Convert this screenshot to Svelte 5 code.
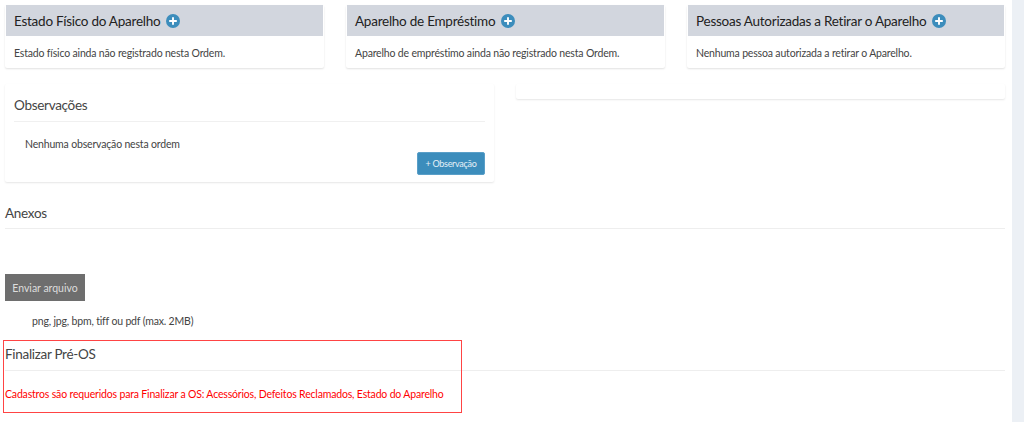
<script>
  const cards = [
    { title: 'Estado Físico do Aparelho', text: 'Estado físico ainda não registrado nesta Ordem.' },
    { title: 'Aparelho de Empréstimo', text: 'Aparelho de empréstimo ainda não registrado nesta Ordem.' },
    { title: 'Pessoas Autorizadas a Retirar o Aparelho', text: 'Nenhuma pessoa autorizada a retirar o Aparelho.' },
  ];
</script>

<div class="page">
  <main class="content">
    <div class="cards">
      {#each cards as card}
        <section class="card">
          <header class="card-head">
            <h3>{card.title}</h3>
            <svg class="plus" viewBox="0 0 14 14" width="14" height="14" aria-hidden="true">
              <circle cx="7" cy="7" r="7" fill="#3c8dbc" />
              <path d="M7 3.2v7.6M3.2 7h7.6" stroke="#fff" stroke-width="1.9" />
            </svg>
          </header>
          <p>{card.text}</p>
        </section>
      {/each}
    </div>

    <div class="split">
      <section class="box obs">
        <h4>Observações</h4>
        <p class="empty">Nenhuma observação nesta ordem</p>
        <div class="actions">
          <button class="btn-obs" type="button">+ Observação</button>
        </div>
      </section>
      <section class="box blank"></section>
    </div>

    <section class="anexos">
      <h4 class="section-title">Anexos</h4>
      <button class="btn-send" type="button">Enviar arquivo</button>
      <p class="hint">png, jpg, bpm, tiff ou pdf (max. 2MB)</p>
    </section>

    <section class="finalizar">
      <h4 class="section-title">Finalizar Pré-OS</h4>
      <p class="required">Cadastros são requeridos para Finalizar a OS: Acessórios, Defeitos Reclamados, Estado do Aparelho</p>
      <div class="highlight"></div>
    </section>
  </main>
  <aside class="rail"></aside>
</div>

<style>
  :global(body) {
    margin: 0;
    background: #fff;
  }

  .page {
    display: flex;
    height: 422px;
    overflow: hidden;
    font-family: "Lato", sans-serif;
    color: #444;
  }

  .content {
    flex: 1;
    min-width: 0;
    padding: 5px 7px 0 5px;
  }

  .rail {
    width: 12px;
    background: #ecf0f5;
  }

  .cards {
    display: grid;
    grid-template-columns: 319px 319px 318px;
    column-gap: 22px;
  }

  .card {
    height: 63px;
    background: #fff;
    box-shadow: 0 1px 2px rgba(0, 0, 0, 0.12);
    border-radius: 2px;
  }

  .card-head {
    display: flex;
    align-items: center;
    gap: 6px;
    height: 31px;
    margin: 0 1px;
    padding: 0 8px;
    background: #d2d6de;
  }

  h3 {
    margin: 0;
    font-size: 13.5px;
    font-weight: 400;
    letter-spacing: -0.25px;
    color: #222;
  }

  .plus {
    flex: none;
  }

  .card p {
    margin: 10px 9px 0;
    font-size: 10.5px;
    line-height: 14px;
    letter-spacing: -0.17px;
  }

  .split {
    display: grid;
    grid-template-columns: 489px 489px;
    column-gap: 22px;
    align-items: start;
    margin-top: 16px;
  }

  .box {
    background: #fff;
    box-shadow: 0 1px 2px rgba(0, 0, 0, 0.1);
    border-radius: 2px;
  }

  .obs {
    height: 98px;
    padding: 0 9px;
    box-sizing: border-box;
  }

  .blank {
    height: 15px;
  }

  h4 {
    margin: 0;
    font-size: 13.5px;
    font-weight: 400;
    letter-spacing: -0.3px;
    color: #444;
  }

  .obs h4 {
    height: 37px;
    line-height: 43px;
    border-bottom: 1px solid #f0f0f0;
  }

  .empty {
    margin: 15px 0 0 11px;
    font-size: 10.5px;
    line-height: 14px;
    letter-spacing: -0.17px;
  }

  .actions {
    display: flex;
    justify-content: flex-end;
    margin-top: 1px;
  }

  .btn-obs {
    width: 68px;
    height: 23px;
    padding: 0;
    border: 1px solid #5a9fc8;
    border-radius: 2px;
    background: #3c8dbc;
    color: #e4f0f7;
    font: inherit;
    font-size: 9px;
    letter-spacing: -0.3px;
  }

  .anexos {
    margin-top: 21px;
  }

  .section-title {
    height: 25px;
    line-height: 20px;
    border-bottom: 1px solid #eee;
  }

  .btn-send {
    display: block;
    width: 80px;
    height: 27px;
    margin-top: 45px;
    padding: 0;
    border: none;
    background: #6e6e6e;
    color: #ddd;
    font: inherit;
    font-size: 10.5px;
  }

  .hint {
    margin: 13px 0 0 27px;
    font-size: 10.5px;
    line-height: 14px;
    letter-spacing: -0.17px;
  }

  .finalizar {
    position: relative;
    margin-top: 18px;
  }

  .finalizar .section-title {
    height: 24px;
    line-height: 17px;
  }

  .required {
    margin: 16px 0 0;
    color: #f00;
    font-size: 10.5px;
    line-height: 14px;
    letter-spacing: -0.17px;
  }

  .highlight {
    position: absolute;
    left: -2px;
    top: -6px;
    width: 457px;
    height: 71px;
    border: 1px solid #f44;
  }
</style>
